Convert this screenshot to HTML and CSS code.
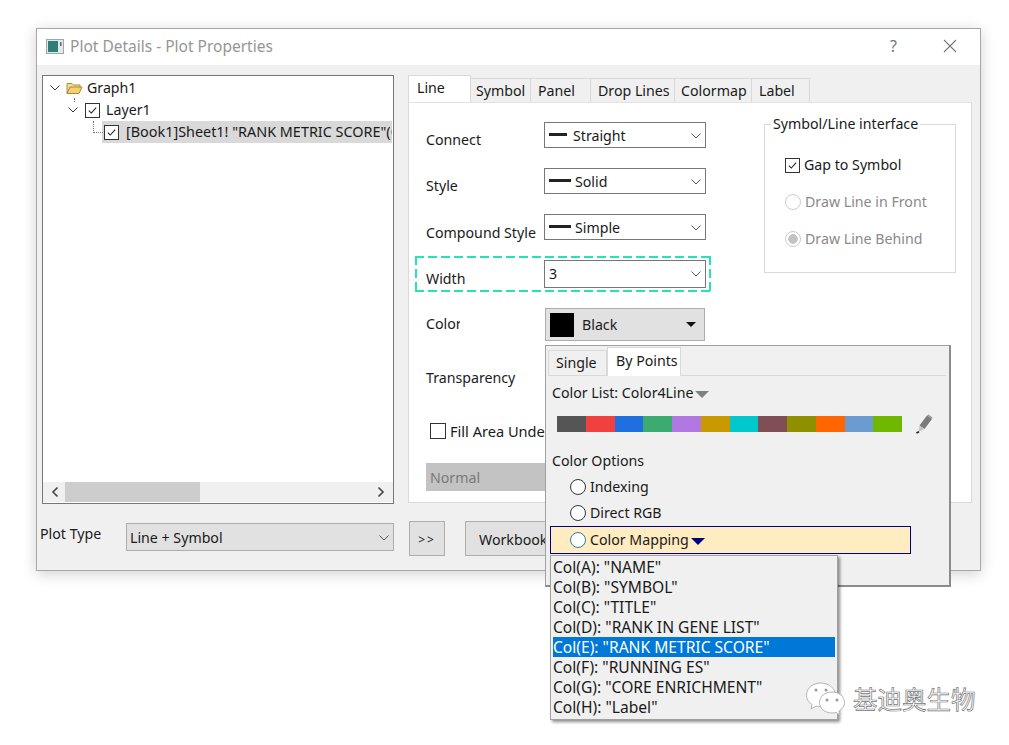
FILE: index.html
```html
<!DOCTYPE html>
<html lang="en">
<head>
    <meta charset="UTF-8">
    <title>Plot Details - Plot Properties</title>
    <link rel="stylesheet" href="styles.css">
</head>
<body>
    <svg class="defs" width="0" height="0">
        <symbol id="chev" viewBox="0 0 12 8"><path d="M1.500 1.500 6 6l4.500-4.500" fill="none" stroke="currentColor" stroke-width="1"/></symbol>
        <symbol id="tick" viewBox="0 0 16 16"><path d="M3.500 8.200 6.500 11.200 12.500 4.500" fill="none" stroke="currentColor" stroke-width="1.300"/></symbol>
    </svg>

    <div class="dialog">
        <div class="titlebar">
            <svg class="app-icon" width="18" height="15" viewBox="0 0 18 15">
                <rect x="0.500" y="0.500" width="17" height="14" fill="#e4e8e8" stroke="#9aa"/>
                <rect x="2" y="2" width="10" height="11" fill="#2f7f78"/>
                <rect x="14" y="3" width="1.500" height="4" fill="#667"/>
            </svg>
            <span class="title">Plot Details - Plot Properties</span>
            <span class="help">?</span>
            <svg class="close" width="14" height="14" viewBox="0 0 14 14"><path d="M1 1l12 12M13 1 1 13" stroke="#777" stroke-width="1.100" fill="none"/></svg>
        </div>

        <div class="main">
            <div class="tree">
                <div class="tree-rows">
                    <div class="tree-row row-graph">
                        <svg class="tree-chev"><use href="#chev"/></svg>
                        <svg class="folder" width="17" height="14" viewBox="0 0 17 14">
                            <path d="M1 12.500V2.500h5l1.500 1.500H14v2" fill="#f3dc9a" stroke="#a98a3c"/>
                            <path d="M1 12.500 4 6h12l-3 6.500z" fill="#f6cf6e" stroke="#a98a3c"/>
                        </svg>
                        <span>Graph1</span>
                    </div>
                    <div class="tree-row row-layer">
                        <svg class="tree-chev"><use href="#chev"/></svg>
                        <span class="check"><svg><use href="#tick"/></svg></span>
                        <span>Layer1</span>
                    </div>
                    <div class="tree-row row-plot">
                        <span class="dots"></span>
                        <span class="check"><svg><use href="#tick"/></svg></span>
                        <span class="plot-name">[Book1]Sheet1! "RANK METRIC SCORE"(G)</span>
                    </div>
                </div>
                <div class="hscroll">
                    <svg class="arrow" width="8" height="12" viewBox="0 0 8 12"><path d="M6.500 1.500 2 6l4.500 4.500" fill="none" stroke="#444" stroke-width="1.600"/></svg>
                    <div class="track"><div class="thumb"></div></div>
                    <svg class="arrow" width="8" height="12" viewBox="0 0 8 12"><path d="M1.500 1.500 6 6l-4.500 4.500" fill="none" stroke="#444" stroke-width="1.600"/></svg>
                </div>
            </div>

            <div class="props">
                <div class="tabs">
                    <div class="tab tab-active">Line</div>
                    <div class="tab tab-symbol">Symbol</div>
                    <div class="tab tab-panel">Panel</div>
                    <div class="tab tab-drop">Drop Lines</div>
                    <div class="tab tab-cmap">Colormap</div>
                    <div class="tab tab-label">Label</div>
                </div>
                <div class="panel">
                    <div class="form">
                        <div class="form-row">
                            <span class="form-label">Connect</span>
                            <div class="select"><i class="line-mark short"></i><span>Straight</span><svg class="select-chev"><use href="#chev"/></svg></div>
                        </div>
                        <div class="form-row">
                            <span class="form-label">Style</span>
                            <div class="select"><i class="line-mark"></i><span>Solid</span><svg class="select-chev"><use href="#chev"/></svg></div>
                        </div>
                        <div class="form-row">
                            <span class="form-label label-low">Compound Style</span>
                            <div class="select"><i class="line-mark"></i><span>Simple</span><svg class="select-chev"><use href="#chev"/></svg></div>
                        </div>
                        <div class="form-row row-width">
                            <span class="form-label label-lower">Width</span>
                            <div class="select select-width"><span>3</span><svg class="select-chev"><use href="#chev"/></svg></div>
                        </div>
                        <div class="form-row row-color">
                            <span class="form-label label-cut">Color</span>
                            <div class="color-btn"><i class="swatch"></i><span>Black</span><b class="caret"></b></div>
                        </div>
                        <div class="form-label transparency">Transparency</div>
                        <div class="fill-row"><span class="check check-fill"></span><span>Fill Area Under Curve</span></div>
                        <div class="normal">Normal</div>
                    </div>

                    <fieldset class="group">
                        <legend>Symbol/Line interface</legend>
                        <div class="group-item"><span class="check"><svg><use href="#tick"/></svg></span><span>Gap to Symbol</span></div>
                        <div class="group-item item-off"><i class="radio"></i><span>Draw Line in Front</span></div>
                        <div class="group-item item-off"><i class="radio radio-on"></i><span>Draw Line Behind</span></div>
                    </fieldset>
                </div>
            </div>
        </div>

        <div class="bottom">
            <span class="plot-type">Plot Type</span>
            <div class="type-select"><span>Line + Symbol</span><svg class="select-chev"><use href="#chev"/></svg></div>
            <div class="btn btn-more">&gt;&gt;</div>
            <div class="btn btn-book">Workbook</div>
        </div>

        <!-- color popup -->
        <div class="popup">
            <div class="pop-tabs">
                <div class="pop-tab">Single</div>
                <div class="pop-tab pop-tab-on">By Points</div>
            </div>
            <div class="color-list">Color List: Color4Line<b class="caret caret-grey"></b></div>
            <div class="palette-row">
                <div class="palette">
                    <i class="c1"></i><i class="c2"></i><i class="c3"></i><i class="c4"></i><i class="c5"></i><i class="c6"></i>
                    <i class="c7"></i><i class="c8"></i><i class="c9"></i><i class="c10"></i><i class="c11"></i><i class="c12"></i>
                </div>
                <svg class="pencil" width="18" height="20" viewBox="0 0 18 20">
                    <path d="M4.500 11.500 12 1.500l5 3.500-7.500 10z" fill="#7a7a7a"/>
                    <path d="M12 1.500 13.500 0.500l4 3L17 5z" fill="#999"/>
                    <path d="M4.500 11.500 9.500 15 3.500 18z" fill="#c4c4c4"/>
                    <path d="M1.500 19 4 17.800" stroke="#222" stroke-width="1.800"/>
                </svg>
            </div>
            <div class="options-title">Color Options</div>
            <div class="option"><i class="radio radio-dark"></i><span>Indexing</span></div>
            <div class="option"><i class="radio radio-dark"></i><span>Direct RGB</span></div>
            <div class="option option-hot"><i class="radio radio-blue"></i><span>Color Mapping</span><b class="caret caret-navy"></b></div>
        </div>

        <div class="submenu">
            <div class="menu-item">Col(A): "NAME"</div>
            <div class="menu-item">Col(B): "SYMBOL"</div>
            <div class="menu-item">Col(C): "TITLE"</div>
            <div class="menu-item">Col(D): "RANK IN GENE LIST"</div>
            <div class="menu-item menu-sel">Col(E): "RANK METRIC SCORE"</div>
            <div class="menu-item">Col(F): "RUNNING ES"</div>
            <div class="menu-item">Col(G): "CORE ENRICHMENT"</div>
            <div class="menu-item">Col(H): "Label"</div>
        </div>
    </div>

    <div class="watermark">
        <svg width="42" height="36" viewBox="0 0 42 36">
            <path d="M16 2C8 2 1.500 7 1.500 14c0 4 2 7 5.500 9.500L6 28l5-3c1.500.4 3 .6 5 .6C24 25.600 30.500 20 30.500 14S24 2 16 2z" fill="#fff" stroke="#b5b5b5"/>
            <path d="M27 11c-7 0-12.500 4.500-12.500 10.500S20 32 27 32c1.500 0 3-.2 4-.6l4 2.600-1-4c3.500-2 5.500-5 5.500-8.500C39.500 15.500 34 11 27 11z" fill="#fff" stroke="#b5b5b5"/>
            <circle cx="11" cy="9" r="1.500" fill="#999"/><circle cx="21" cy="9" r="1.500" fill="#999"/>
            <circle cx="22" cy="19" r="1.500" fill="#999"/><circle cx="32" cy="19" r="1.500" fill="#999"/>
        </svg>
        <span class="mark-text">基迪奥生物</span>
    </div>
</body>
</html>
```

FILE: styles.css
```css
body {
    margin: 0;
    padding: 28px 0 0 36px;
    background: #fff;
    color: #1a1a1a;
    font-family: "Noto Sans", "Liberation Sans", sans-serif;
    font-size: 14.200px;
    line-height: 20px;
    height: 717px;
    overflow: hidden;
    position: relative;
}

.defs {
    position: absolute;
}

.dialog {
    position: relative;
    box-sizing: border-box;
    width: 945px;
    height: 543px;
    background: #f0f0f0;
    border: 1px solid #a8a8a8;
    box-shadow: 0 3px 14px rgba(0, 0, 0, 0.18);
}

.titlebar {
    display: flex;
    align-items: center;
    box-sizing: border-box;
    height: 36px;
    background: #fff;
    padding: 0 23px 2px 9px;
}

.app-icon {
    margin-right: 6px;
}

.title {
    color: #969696;
    font-size: 15.500px;
    flex: 1;
}

.help {
    color: #777;
    font-size: 16px;
    margin-right: 46px;
}

.main {
    display: flex;
    gap: 14px;
    padding: 10px 0 0 5px;
}

/* tree */
.tree {
    box-sizing: border-box;
    width: 352px;
    height: 429px;
    background: #fff;
    border: 1px solid #777;
    display: flex;
    flex-direction: column;
    justify-content: space-between;
}

.tree-row {
    display: flex;
    align-items: center;
    height: 22px;
    white-space: nowrap;
}

.tree-rows {
    padding-top: 1px;
}

.row-graph {
    padding-left: 6px;
    position: relative;
}

/* little dotted stub under the root node */
.row-graph::after {
    content: "";
    position: absolute;
    left: 31px;
    top: 21px;
    height: 4px;
    border-left: 1px dotted #777;
}

.row-layer {
    padding-left: 24px;
}

.row-plot {
    margin-left: 59px;
    margin-right: 1px;
    background: #d9d9d9;
    position: relative;
}

.plot-name {
    overflow: hidden;
    font-size: 14.400px;
}

.tree-chev {
    width: 12px;
    height: 8px;
    color: #333;
    margin-right: 5px;
}

.row-layer .tree-chev {
    margin-right: 6px;
}

.folder {
    margin-right: 4px;
}

.dots {
    position: absolute;
    left: -9px;
    top: 0;
    width: 9px;
    height: 11px;
    border-left: 1px dotted #777;
    border-bottom: 1px dotted #777;
}

.row-plot .check {
    margin-left: 2px;
    margin-right: 7px;
}

.check {
    box-sizing: border-box;
    display: inline-block;
    flex: none;
    width: 15px;
    height: 15px;
    background: #fff;
    border: 1px solid #333;
    margin-right: 6px;
    color: #222;
}

.check svg {
    display: block;
    width: 13px;
    height: 13px;
}

.hscroll {
    display: flex;
    align-items: center;
    height: 20px;
    background: #f0f0f0;
    padding: 0 8px;
    margin-bottom: 1px;
}

.track {
    flex: 1;
    height: 100%;
    padding: 0 8px 0 6px;
}

.thumb {
    width: 135px;
    height: 100%;
    background: #cdcdcd;
}

/* tabs */
.props {
    width: 564px;
}

.tabs {
    display: flex;
    align-items: flex-end;
    height: 27px;
}

.tab {
    box-sizing: border-box;
    height: 24px;
    padding-left: 4px;
    line-height: 24px;
    background: #f0f0f0;
    border: 1px solid #d9d9d9;
    border-left: 0;
    border-bottom: 0;
    white-space: nowrap;
}

.tab-active {
    width: 63px;
    height: 27px;
    padding-left: 8px;
    line-height: 24px;
    background: #fff;
    border: 1px solid #d9d9d9;
    border-bottom: 0;
}

.tab-symbol {
    width: 60px;
    padding-left: 5px;
}

.tab-panel {
    width: 60px;
    padding-left: 7px;
}

.tab-drop {
    width: 84px;
    padding-left: 7px;
}

.tab-cmap {
    width: 77px;
    padding-left: 6px;
}

.tab-label {
    width: 58px;
    padding-left: 7px;
}

.panel {
    box-sizing: border-box;
    position: relative;
    display: flex;
    justify-content: space-between;
    height: 401px;
    background: #fff;
    border: 1px solid #d9d9d9;
    border-top-color: #e2e2e2;
    padding: 19px 15px 0 17px;
}

.form {
    width: 290px;
}

.form-row {
    display: flex;
    height: 26px;
    margin-bottom: 20px;
}

.form-label {
    display: block;
    width: 118px;
    padding-top: 8px;
    flex: none;
    white-space: nowrap;
}

.form-label.label-low {
    padding-top: 9px;
}

.form-label.label-lower {
    padding-top: 9px;
}

.select {
    box-sizing: border-box;
    display: flex;
    align-items: center;
    width: 162px;
    height: 26px;
    border: 1px solid #777;
    padding: 2px 3px 0 4px;
    background: #fff;
}

.select span {
    flex: 1;
}

.select-chev {
    width: 12px;
    height: 8px;
    color: #555;
    flex: none;
}

.line-mark {
    width: 22px;
    height: 3px;
    margin-top: -3px;
    margin-right: 4px;
    background: #222;
}

.line-mark.short {
    width: 18px;
    margin-right: 6px;
}

.row-width {
    height: 28px;
    position: relative;
}

/* highlight frame drawn on the original figure */
.row-width::before {
    content: "";
    position: absolute;
    left: -11px;
    top: -4px;
    width: 296px;
    height: 36px;
    --dash: repeating-linear-gradient(90deg, #25e4b4 0 9px, transparent 9px 13px);
    --dash-v: repeating-linear-gradient(180deg, #25e4b4 0 9px, transparent 9px 13px);
    background:
        var(--dash) left top / 100% 2px no-repeat,
        var(--dash) left bottom / 100% 2px no-repeat,
        var(--dash-v) left top / 2px 100% no-repeat,
        var(--dash-v) right top / 2px 100% no-repeat;
}

.select-width {
    height: 28px;
    position: relative;
    padding-top: 0;
}

.row-color {
    height: 33px;
    margin-bottom: 0;
}

.row-color .form-label {
    padding-top: 6px;
}

.form-label.label-cut {
    width: 34px;
    overflow: hidden;
    margin-right: 85px;
}

.color-btn {
    box-sizing: border-box;
    display: flex;
    align-items: center;
    width: 160px;
    height: 33px;
    background: #e1e1e1;
    border: 1px solid #adadad;
    padding: 0 8px 0 4px;
}

.color-btn span {
    flex: 1;
    padding-top: 1px;
}

.swatch {
    width: 24px;
    height: 24px;
    margin-right: 8px;
    background: #000;
}

.caret {
    display: inline-block;
    width: 0;
    height: 0;
    border-left: 5px solid transparent;
    border-right: 5px solid transparent;
    border-top: 5px solid #111;
}

.form-label.transparency {
    margin-top: 27px;
    padding-top: 0;
}

.fill-row {
    display: flex;
    align-items: center;
    margin-top: 33px;
    padding-left: 4px;
    white-space: nowrap;
    font-size: 14.600px;
}

.check-fill {
    width: 16px;
    height: 16px;
    margin-right: 4px;
}

.normal {
    margin-top: 22px;
    width: 280px;
    height: 28px;
    line-height: 30px;
    padding-left: 4px;
    box-sizing: border-box;
    background: #c3c3c3;
    color: #7a7a7a;
}

/* group box */
.group {
    box-sizing: border-box;
    width: 192px;
    height: 159px;
    margin: -8px 0 0;
    padding: 21px 0 0 20px;
    border: 1px solid #d9d9d9;
}

.group legend {
    padding: 0 2px;
    margin-left: -14px;
}

.group-item {
    display: flex;
    align-items: center;
    height: 20px;
    margin-bottom: 17px;
}

.group-item .check {
    margin-right: 4px;
}

.item-off {
    color: #8a8a8a;
}

.radio {
    box-sizing: border-box;
    display: block;
    flex: none;
    width: 16px;
    height: 16px;
    margin-right: 4px;
    border-radius: 50%;
    border: 1px solid #ccc;
    background: #fff;
}

.radio-on {
    background: radial-gradient(circle, #c4c4c4 0 4.500px, #fff 5px);
}

.radio-dark {
    border-color: #333;
}

.radio-blue {
    border-color: #2a7fa8;
}

/* bottom row */
.bottom {
    display: flex;
    align-items: flex-start;
    margin-top: 17px;
    padding-left: 3px;
}

.plot-type {
    width: 86px;
    margin-top: 3px;
}

.type-select {
    box-sizing: border-box;
    display: flex;
    align-items: center;
    justify-content: space-between;
    width: 268px;
    height: 28px;
    margin-top: 2px;
    padding: 1px 3px 0 3px;
    background: #e1e1e1;
    border: 1px solid #adadad;
}

.btn {
    box-sizing: border-box;
    height: 35px;
    background: #e1e1e1;
    border: 1px solid #adadad;
    line-height: 35px;
    text-align: center;
}

.btn-more {
    width: 36px;
    margin-left: 15px;
    margin-right: 20px;
    letter-spacing: 2px;
    font-size: 12px;
}

.btn-book {
    width: 120px;
    text-align: left;
    padding-left: 13px;
}

/* popup */
.popup {
    position: absolute;
    left: 508px;
    top: 316px;
    box-sizing: border-box;
    width: 406px;
    height: 242px;
    background: #f0f0f0;
    border: 1px solid #a0a0a0;
    border-bottom: 2px solid #8c8c8c;
    border-right: 2px solid #8c8c8c;
}

.pop-tabs {
    display: flex;
    align-items: flex-end;
    height: 29px;
    margin: 0 3px 0 2px;
    border-bottom: 1px solid #d9d9d9;
}

.pop-tab {
    box-sizing: border-box;
    width: 59px;
    height: 25px;
    padding-left: 7px;
    border: 1px solid #d9d9d9;
    border-bottom: 0;
    line-height: 24px;
}

.pop-tab-on {
    width: 74px;
    height: 29px;
    margin-bottom: -1px;
    padding-left: 8px;
    background: #fff;
    border-bottom: 0;
    line-height: 26px;
}

.color-list {
    margin: 7px 0 0 6px;
    display: flex;
    align-items: center;
    white-space: nowrap;
}

.caret-grey {
    margin: 3px 0 0 2px;
    border-left-width: 7px;
    border-right-width: 7px;
    border-top: 7px solid #808080;
}

.palette-row {
    display: flex;
    align-items: center;
    margin: 10px 0 0 11px;
    height: 22px;
}

.palette {
    display: flex;
    width: 345px;
    height: 16px;
}

.palette i {
    flex: 1;
}

.c1 { background: #555; }
.c2 { background: #f04040; }
.c3 { background: #1f6fe0; }
.c4 { background: #3cab70; }
.c5 { background: #b078e0; }
.c6 { background: #c99a00; }
.c7 { background: #00c8cc; }
.c8 { background: #7f4f55; }
.c9 { background: #8f8f00; }
.c10 { background: #ff6600; }
.c11 { background: #6c9bd2; }
.c12 { background: #70b800; }

.pencil {
    margin-left: 13px;
}

.options-title {
    margin: 16px 0 0 6px;
}

.option {
    display: flex;
    align-items: center;
    height: 26px;
    padding-left: 24px;
}

.options-title + .option {
    margin-top: 3px;
}

.option-hot {
    box-sizing: border-box;
    width: 361px;
    height: 28px;
    margin-left: 4px;
    padding-left: 19px;
    background: #ffecc0;
    border: 1px solid #000080;
}

.caret-navy {
    margin: 3px 0 0 2px;
    border-left-width: 7px;
    border-right-width: 7px;
    border-top: 7px solid #000080;
}

/* column menu */
.submenu {
    position: absolute;
    left: 513px;
    top: 526px;
    box-sizing: border-box;
    width: 288px;
    height: 165px;
    padding: 1px 2px;
    background: #f0f0f0;
    border: 1px solid #a0a0a0;
    box-shadow: 2px 2px 3px rgba(0, 0, 0, 0.45);
    font-size: 15.600px;
}

.menu-item {
    height: 20px;
    line-height: 20px;
    white-space: nowrap;
}

.menu-sel {
    background: #0078d7;
    color: #fff;
}

.watermark {
    position: absolute;
    left: 805px;
    top: 681px;
    display: flex;
    align-items: center;
    gap: 6px;
}

.mark-text {
    font-family: "Noto Sans CJK SC", sans-serif;
    font-size: 24.500px;
    line-height: 36px;
    color: #fff;
    -webkit-text-stroke: 0.7px #777;
    white-space: nowrap;
}
```
